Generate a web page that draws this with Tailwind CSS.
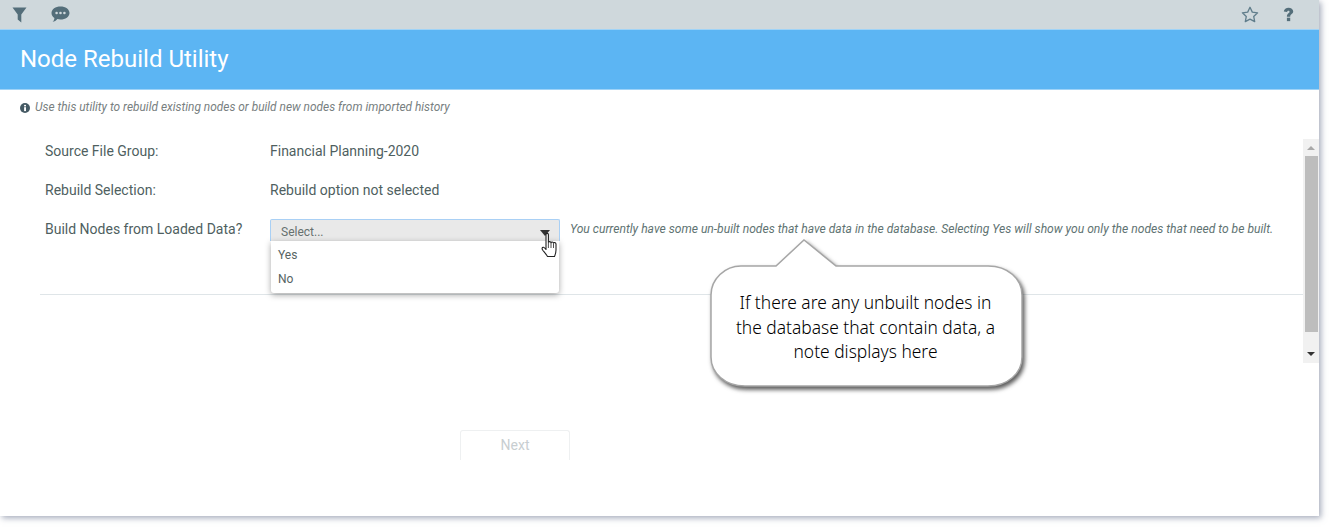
<!DOCTYPE html>
<html><head><meta charset="utf-8">
<script src="https://cdn.jsdelivr.net/npm/@tailwindcss/browser@4"></script>
</head>
<body class="bg-white m-0">
<div class="w-[1329px] h-[527px] overflow-hidden font-['Roboto',sans-serif] relative">
<div class="relative w-[1319px] h-[516px] bg-white shadow-[2px_2px_6px_rgba(90,100,130,0.55)] flex flex-col">
  <div class="h-[29px] bg-[#cfd8dc] flex items-center justify-between px-[12px] shrink-0">
    <div class="flex items-center gap-[24px]">
      <svg class="w-[15px] h-[16px]" viewBox="0 0 15 16"><path d="M0.5 0.5h14L9.3 7.6V15.5L5.7 12.5V7.6z" fill="#546e7a"/></svg>
      <svg class="w-[19px] h-[17px]" viewBox="0 0 19 17"><path d="M9.5 0.5C14.5 0.5 18.5 3.2 18.5 7S14.5 13.5 9.5 13.5C8.4 13.5 7.4 13.4 6.4 13.1C5.2 14.6 3.4 15.9 1.6 16C2.8 14.8 3.4 13.2 3.4 11.9C1.6 10.7 0.5 9 0.5 7C0.5 3.2 4.5 0.5 9.5 0.5Z" fill="#546e7a"/><circle cx="5.6" cy="7" r="1.3" fill="#cfd8dc"/><circle cx="9.5" cy="7" r="1.3" fill="#cfd8dc"/><circle cx="13.4" cy="7" r="1.3" fill="#cfd8dc"/></svg>
    </div>
    <div class="flex items-center gap-[24px] pr-[13px]">
      <svg class="w-[18px] h-[17px]" viewBox="0 0 18 17"><path d="M9 1.3L11.3 6.1L16.6 6.8L12.7 10.4L13.7 15.6L9 13.1L4.3 15.6L5.3 10.4L1.4 6.8L6.7 6.1Z" fill="none" stroke="#607d8b" stroke-width="1.3" stroke-linejoin="round"/></svg>
      <svg class="w-[11px] h-[15px]" viewBox="0 0 10 14"><path d="M0.6 4.2C0.8 1.8 2.8 0.6 5 0.6C7.4 0.6 9.4 1.9 9.4 4.2C9.4 6.6 6.6 6.6 6.6 9H3.5C3.5 5.7 6 5.8 6 4.4C6 3.8 5.6 3.4 5 3.4C4.3 3.4 3.8 3.9 3.7 4.6Z" fill="#546e7a"/><rect x="3.5" y="10" width="3.1" height="3.2" fill="#546e7a"/></svg>
    </div>
  </div>
  <div class="h-[61px] border-y border-[#9fd3f7] bg-[#5cb5f3] flex items-center pl-[20px] pb-px shrink-0 text-white text-[24px] leading-none">Node Rebuild Utility</div>
  <div class="h-[35px] flex items-center pl-[20px] gap-[5px] text-[11.9px] italic text-[#78807f] shrink-0">
    <svg class="w-[10px] h-[10px] shrink-0" viewBox="0 0 10 10"><circle cx="5" cy="5" r="5" fill="#455a64"/><rect x="4.1" y="4.2" width="1.9" height="3.9" fill="#fff"/><rect x="4.1" y="1.9" width="1.9" height="1.5" fill="#fff"/></svg>
    <span>Use this utility to rebuild existing nodes or build new nodes from imported history</span>
  </div>
  <div class="flex flex-1 relative">
    <div class="w-[1303px] pl-[40px]">
      <div class="pl-[5px] pt-[7px] text-[14px] text-[#4f5f5f]">
        <div class="flex h-[39px] items-center"><div class="w-[225px]">Source File Group:</div><div>Financial Planning-2020</div></div>
        <div class="flex h-[39px] items-center"><div class="w-[225px]">Rebuild Selection:</div><div>Rebuild option not selected</div></div>
        <div class="flex items-start pt-[9px]">
          <div class="w-[225px] leading-[20px]">Build Nodes from Loaded Data?</div>
          <div class="relative w-[290px] h-[22px] shrink-0 bg-[#e9e9e9] border border-[#a9d0f5] border-b-0 rounded-t-[2px] text-[12px] text-[#66706f] pl-[10px] pt-[4px] leading-[16px]">Select...
            <span class="absolute right-[9px] top-[10px] w-0 h-0 border-l-[5px] border-r-[5px] border-t-[6px] border-l-transparent border-r-transparent border-t-[#333]"></span>
            <div class="absolute left-0 top-[21px] w-[288px] h-[52px] bg-white rounded-b-[3px] shadow-[0_2px_6px_rgba(0,0,0,0.35)] text-[12px] text-[#566463] pl-[7px] pt-[2px] z-10">
              <div class="h-[24px] leading-[24px]">Yes</div>
              <div class="h-[24px] leading-[24px]">No</div>
            </div>
          </div>
          <div class="pl-[10px] text-[12.1px] italic text-[#607372] leading-[20px] whitespace-nowrap">You currently have some un-built nodes that have data in the database. Selecting Yes will show you only the nodes that need to be built.</div>
        </div>
      </div>
      <div class="mt-[53px] h-px bg-[#dfe5e8]"></div>
      <div class="ml-[420px] mt-[135px] w-[110px] h-[30px] border border-b-0 border-[#eef0f1] rounded-t-[3px] flex items-center justify-center text-[14px] text-[#c8ced1]">Next</div>
    </div>
    <div class="absolute left-[1303px] top-[14px] w-[16px] h-[224px] bg-[#f1f1f1] flex flex-col items-center">
      <div class="h-[17px] flex items-center justify-center"><span class="w-0 h-0 border-l-[4px] border-r-[4px] border-b-[4px] border-l-transparent border-r-transparent border-b-[#a8a8a8]"></span></div>
      <div class="w-[13px] h-[176px] bg-[#bdbdbd]"></div>
      <div class="flex-1 flex items-end pb-[7px] justify-center"><span class="w-0 h-0 border-l-[4px] border-r-[4px] border-t-[4px] border-l-transparent border-r-transparent border-t-[#333]"></span></div>
    </div>
  </div>
</div>
<!-- pointer cursor -->
<svg class="absolute left-[540px] top-[232px] w-[20px] h-[27px] z-20" viewBox="0 0 20 27"><path d="M6 2.5C6 1 8.4 1 8.4 2.5V10.5C8.6 9.3 10.8 9.3 11 10.8C11.2 9.6 13.3 9.7 13.5 11.2C13.8 10.2 16 10.4 16 12V18C16 21 15 23 14.5 24.5H7.5C6.5 22.8 5 21 3 18.5C1.5 16.5 2 15 3.5 15.3C4.5 15.5 5.2 16.5 6 17.5Z" fill="#fff" stroke="#222" stroke-width="1.1" stroke-linejoin="round"/><path d="M8.4 11V16M11 11V16M13.5 11.5V16" stroke="#222" stroke-width=".8" fill="none"/></svg>
<!-- callout -->
<div class="absolute left-[705px] top-[235px] w-[330px] h-[160px] z-20">
  <svg class="absolute inset-0 w-full h-full drop-shadow-[2px_3px_2px_rgba(50,50,50,0.8)]" viewBox="0 0 330 160">
    <path d="M36 31H71L99 5L131 31H283C303 31 317 44 317 60V122C317 138 303 151 283 151H40C20 151 6 138 6 122V60C6 44 20 31 36 31Z" fill="#fff" stroke="#a6a6a6" stroke-width="1.5"/>
  </svg>
  <div class="absolute left-[6px] w-[309px] top-[55px] text-center text-[17.4px] font-light leading-[24.7px] text-black font-['Noto_Sans',sans-serif]">If there are any unbuilt nodes in<br>the database that contain data, a<br>note displays here</div>
</div>
</div>
</body></html>
